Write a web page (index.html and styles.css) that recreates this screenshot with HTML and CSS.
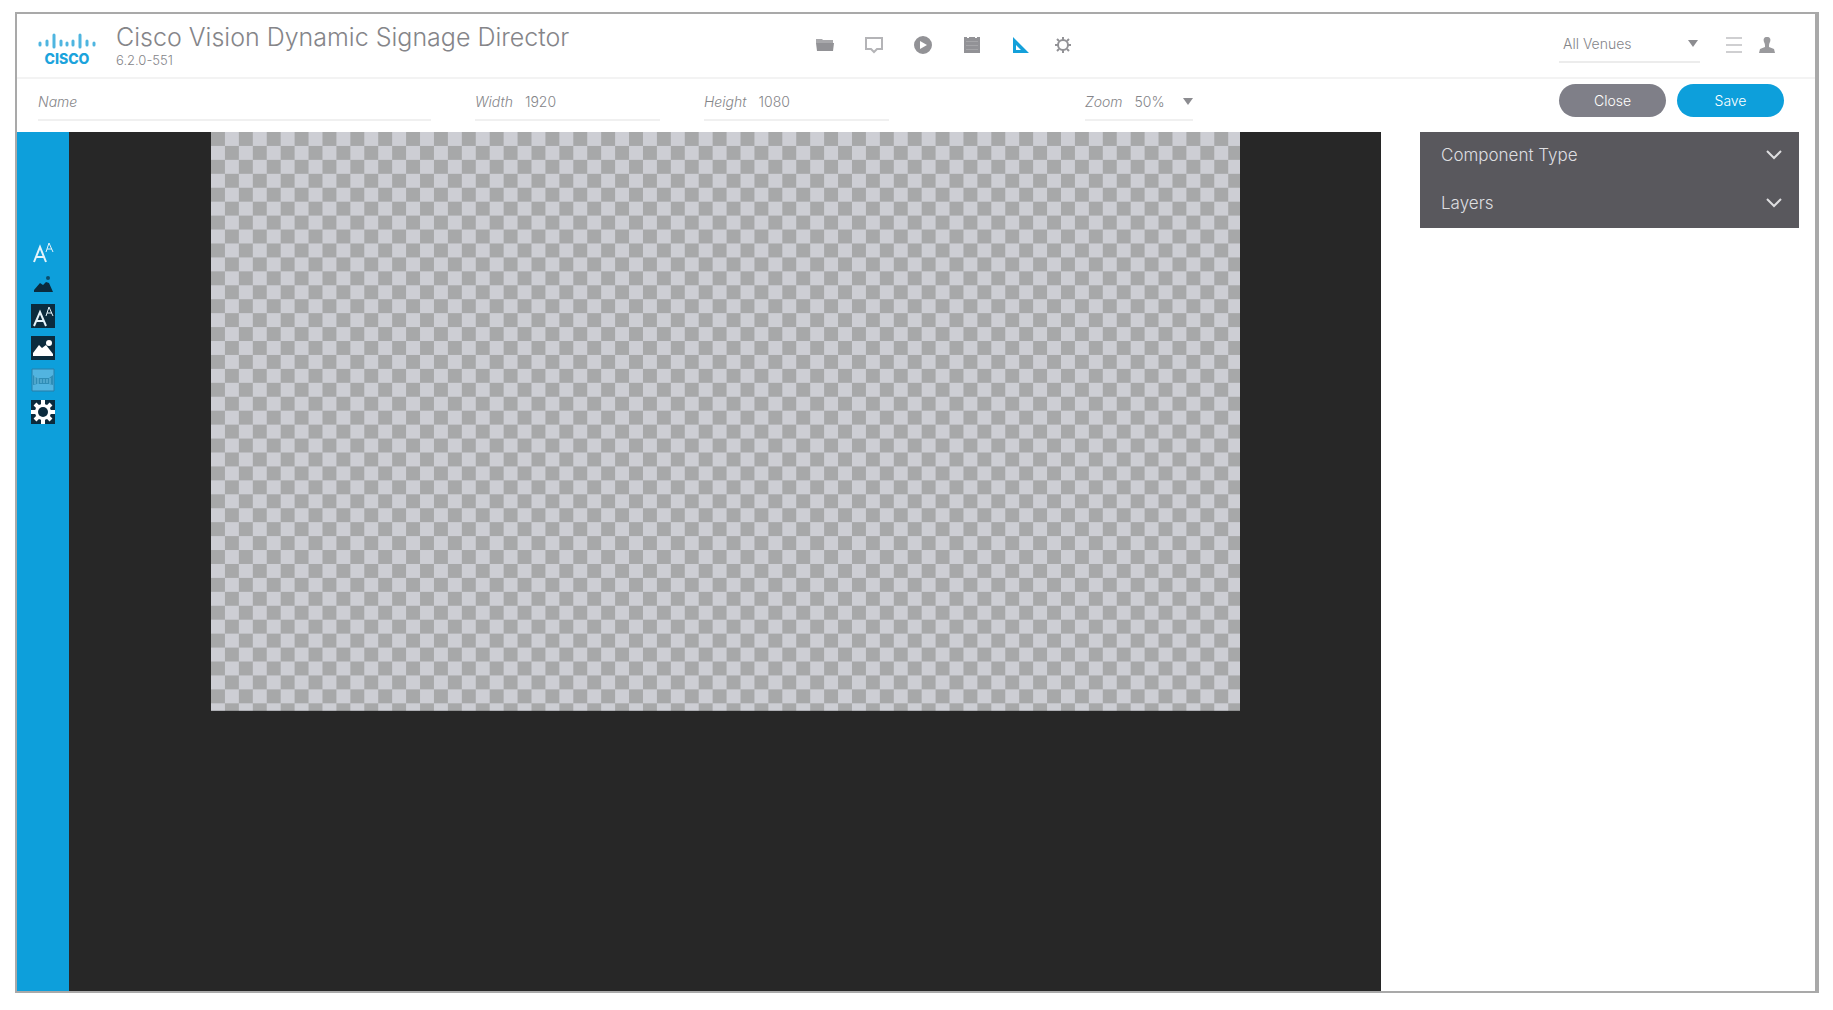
FILE: index.html
```html
<!DOCTYPE html>
<html lang="en">
<head>
<meta charset="utf-8">
<meta name="viewport" content="width=device-width, initial-scale=1">
<title>Cisco Vision Dynamic Signage Director</title>
<link rel="stylesheet" href="styles.css">
</head>
<body>
<div class="app">
  <header class="header">
    <div class="brand">
      <div class="logo">
        <svg class="logo-bars" width="58" height="18" viewBox="0 0 58 18" aria-hidden="true">
          <path d="M2 11v2M9 9v4M16 3v12M23 9v4M29 11v2M35 9v4M42 3v12M49 9v4M56 11v2"/>
        </svg>
        <span class="logo-name">CISCO</span>
      </div>
      <div>
        <h1 class="title">Cisco Vision Dynamic Signage Director</h1>
        <p class="version">6.2.0-551</p>
      </div>
    </div>
    <nav class="nav" aria-label="Main">
      <a href="#content" aria-label="Content"><svg width="18" height="18" viewBox="0 0 18 18"><path class="fill" d="M0 3h6l1 1h10v3H0z" opacity=".8"/><path class="fill" d="M0 7h18l-1 8H1z"/></svg></a>
      <a href="#displays" aria-label="Displays"><svg width="18" height="18" viewBox="0 0 18 18"><path class="line soft" d="M1 2h16v11h-5l-3 3-3-3H1z"/></svg></a>
      <a href="#playback" aria-label="Playback"><svg width="18" height="18" viewBox="0 0 18 18"><path class="fill" fill-rule="evenodd" d="M9 0a9 9 0 1 1 0 18A9 9 0 0 1 9 0zM6 5v8l7-4z"/></svg></a>
      <a href="#schedule" aria-label="Schedule"><svg width="18" height="18" viewBox="0 0 18 18"><path class="fill" d="M1 1h3v1h2V1h6v1h2V1h3v16H1z"/><path class="grid" d="M3 5.500h12M3 9.500h12M3 13.500h12"/></svg></a>
      <a class="current" href="#design" aria-label="Design" aria-current="page"><svg width="18" height="18" viewBox="0 0 18 18"><path class="fill" fill-rule="evenodd" d="M1 1l16 16H1zM4 9v5h5z"/></svg></a>
      <a class="last" href="#settings" aria-label="Settings"><svg width="18" height="18" viewBox="0 0 18 18"><circle class="line" cx="9" cy="9" r="5"/><path class="line" d="M9 1v3M9 14v3M1 9h3M14 9h3M3 3l2 2M13 13l2 2M3 15l2-2M13 5l2-2"/></svg></a>
    </nav>
    <div class="account">
      <div class="venue">
        <select class="select" aria-label="Venue"><option>All Venues</option></select>
        <svg class="arrow" width="10" height="7" viewBox="0 0 10 7" aria-hidden="true"><path d="M0 0h10L5 7z"/></svg>
      </div>
      <button class="icon-button" type="button" aria-label="Menu"><svg width="16" height="18" viewBox="0 0 16 18"><path class="pale" d="M0 2h16M0 9h16M0 16h16"/></svg></button>
      <button class="icon-button" type="button" aria-label="Account"><svg width="16" height="18" viewBox="0 0 16 18"><path class="fill" d="M8 1c3 0 4 2 3 5-1 2-1 3-1 5l5 2 1 4H0l1-4 5-2c0-2 0-3-1-5C4 3 5 1 8 1z"/></svg></button>
    </div>
  </header>

  <form class="toolbar">
    <div class="field name"><label for="name">Name</label><input id="name" type="text"></div>
    <div class="field size"><label for="width">Width</label><input id="width" type="text" value="1920"></div>
    <div class="field size"><label for="height">Height</label><input id="height" type="text" value="1080"></div>
    <div class="field zoom"><label for="zoom">Zoom</label>
      <select class="select" id="zoom"><option>50%</option></select>
      <svg class="arrow" width="10" height="7" viewBox="0 0 10 7" aria-hidden="true"><path d="M0 0h10L5 7z"/></svg>
    </div>
    <div class="actions">
      <button class="pill" type="button">Close</button>
      <button class="pill save" type="submit">Save</button>
    </div>
  </form>

  <main class="workspace">
    <div class="tools" role="toolbar" aria-label="Components">
      <button type="button" aria-label="Text"><svg width="24" height="24" viewBox="0 0 24 24"><path class="white" d="M3 22L9 7l6 15M5 17h8"/><path class="white thin" d="M15 12l3-9 4 9M16 9h5"/></svg></button>
      <button type="button" aria-label="Image"><svg width="24" height="24" viewBox="0 0 24 24"><path class="dark" d="M3 20v-2l6-7 3 2 3-3 3 1 4 9z"/><circle class="dark" cx="17" cy="6" r="2" opacity=".7"/></svg></button>
      <button type="button" aria-label="Data text"><svg width="24" height="24" viewBox="0 0 24 24"><path class="dark" d="M0 0h24v24H0z"/><path class="white" d="M3 22L9 8l6 14M5 17h8"/><path class="white thin" d="M15 12l3-9 4 9M16 9h5"/></svg></button>
      <button type="button" aria-label="Data image"><svg width="24" height="24" viewBox="0 0 24 24"><path class="dark" d="M0 0h24v24H0z"/><path class="solid" d="M2 20v-3l6-8 3 3 4-3 7 9v2z"/><circle class="solid" cx="18" cy="7" r="3"/></svg></button>
      <button type="button" aria-label="Ticker"><svg width="24" height="24" viewBox="0 0 24 24"><path class="screen" d="M1 1h22v22H1z"/><path class="band" d="M2 7l4 3h12l4-3v10l-4-1H6l-4 1z"/><path class="ticks" d="M4 8v8M7 10v6M10 11v4M13 11v4M16 11v4M19 10v6"/></svg></button>
      <button type="button" aria-label="Widget"><svg width="24" height="24" viewBox="0 0 24 24"><path class="dark" d="M0 0h24v24H0z"/><path class="spokes" d="M12 0v24M0 12h24M4 4l16 16M4 20L20 4"/><circle class="solid" cx="12" cy="12" r="8"/><circle class="dark" cx="12" cy="12" r="5"/></svg></button>
    </div>
    <div class="stage">
      <svg class="canvas" viewBox="0 0 960 540" role="img" aria-label="Canvas">
        <defs>
          <pattern id="checks" width="26" height="26" patternUnits="userSpaceOnUse">
            <path class="check-light" d="M0 0h26v26H0z"/>
            <path class="check-dark" d="M0 0h13v13H0zM13 13h13v13H13z"/>
          </pattern>
        </defs>
        <rect width="960" height="540" fill="url(#checks)"/>
      </svg>
    </div>
    <aside class="side">
      <div class="panel">
        <button type="button" aria-expanded="false">Component Type<svg width="16" height="10" viewBox="0 0 16 10" aria-hidden="true"><path d="M1 1l7 7 7-7"/></svg></button>
        <button type="button" aria-expanded="false">Layers<svg width="16" height="10" viewBox="0 0 16 10" aria-hidden="true"><path d="M1 1l7 7 7-7"/></svg></button>
      </div>
    </aside>
  </main>
</div>
</body>
</html>
```
FILE: styles.css
```css
* { box-sizing: border-box; }

body {
  margin: 0;
  padding: 12px 14px 17px 15px;
  background: #fff;
  color: #858589;
  font: 300 14px/20px Inter, "Liberation Sans", sans-serif;
}

button, input, select {
  margin: 0;
  padding: 0;
  border: 0;
  background: none;
  color: inherit;
  font: inherit;
}

svg { display: block; }

.app {
  display: flex;
  flex-direction: column;
  min-height: calc(100vh - 29px);
  border: 2px solid #a9a9a9;
  border-right-width: 4px;
}

.header {
  display: grid;
  grid-template-columns: 4fr 3fr 2fr;
  height: 65px;
  border-bottom: 2px solid #f3f3f3;
}

.brand {
  display: flex;
  gap: 20px;
  padding: 8px 0 0 21px;
  white-space: nowrap;
}

.logo {
  display: flex;
  flex-direction: column;
  align-items: center;
  padding-top: 10px;
}

.logo-bars path {
  fill: none;
  stroke: #4fb5e0;
  stroke-width: 3;
  stroke-linecap: round;
}

.logo-name {
  color: #1ba3dc;
  font-weight: 800;
  font-size: 14px;
  line-height: 18px;
}

.title {
  margin: 0;
  font-size: 25px;
  font-weight: 300;
  line-height: 31px;
}

.version {
  margin: 0;
  font-size: 13px;
  line-height: 14px;
}

.nav {
  display: flex;
  align-items: center;
  gap: 31px;
  padding-bottom: 2px;
}

.nav a { color: #929296; }
.nav .current { color: #14a0da; }
.nav .last { margin-left: -7px; }

.fill { fill: currentColor; }
.line { fill: none; stroke: currentColor; stroke-width: 2; }
.soft { stroke: #b4b4b7; }
.pale { fill: none; stroke: #cfcfd1; stroke-width: 2; }
.grid { fill: none; stroke: #a5a5a8; stroke-width: 1; }

.account {
  display: flex;
  align-items: center;
  justify-content: flex-end;
  gap: 17px;
  padding: 0 40px 2px 0;
}

.venue {
  display: flex;
  align-items: center;
  width: 141px;
  height: 36px;
  margin: 0 9px 0 0;
  padding: 0 2px 0 4px;
  border-bottom: 2px solid #ececec;
}

.select {
  flex: 1;
  min-width: 0;
  appearance: none;
}

.arrow { fill: #8c8c90; }
.icon-button { color: #9a9a9d; }

.toolbar {
  display: flex;
  align-items: flex-start;
  gap: 44px;
  height: 53px;
  padding: 5px 31px 0 21px;
}

.field {
  display: flex;
  align-items: center;
  gap: 12px;
  min-width: 0;
  height: 37px;
  border-bottom: 2px solid #f0f0f0;
}

.field label { font-style: italic; }

.field input {
  flex: 1;
  min-width: 0;
}

.name { flex: 0 1 393px; }
.size { flex: 0 1 185px; }
.zoom { flex: 0 0 108px; margin-left: 152px; }

.actions {
  display: flex;
  gap: 11px;
  margin-left: auto;
}

.pill {
  width: 107px;
  height: 33px;
  border-radius: 17px;
  background: #7f7f88;
  color: #fff;
}

.save { background: #0d9fdb; }

.workspace {
  flex: 1;
  display: grid;
  grid-template-columns: 52px 1fr 434px;
}

.tools {
  display: flex;
  flex-direction: column;
  align-items: center;
  gap: 8px;
  padding-top: 108px;
  background: #0d9fdb;
}

.white { fill: none; stroke: #e4f3fa; stroke-width: 2; }
.thin { stroke-width: 1; }
.dark { fill: #0b2b3d; }
.solid { fill: #fff; }
.spokes { fill: none; stroke: #fff; stroke-width: 4; }
.screen { fill: #52b4e0; stroke: #287fa8; stroke-width: 1; }
.band { fill: #2f8db6; }
.ticks { stroke: #6fbfe2; stroke-width: 1; }

.stage {
  padding: 0 141px 0 142px;
  background: #272727;
}

.canvas { width: 100%; height: auto; }
.check-light { fill: #cdced4; }
.check-dark { fill: #a7a8a9; }

.side { padding: 0 16px 0 39px; }

.panel {
  background: #59585d;
  color: #dedee0;
  font-size: 17px;
}

.panel button {
  display: flex;
  align-items: center;
  justify-content: space-between;
  width: 100%;
  height: 48px;
  padding: 0 17px 2px 21px;
}

.panel path { fill: none; stroke: #dedee0; stroke-width: 2; }
```
